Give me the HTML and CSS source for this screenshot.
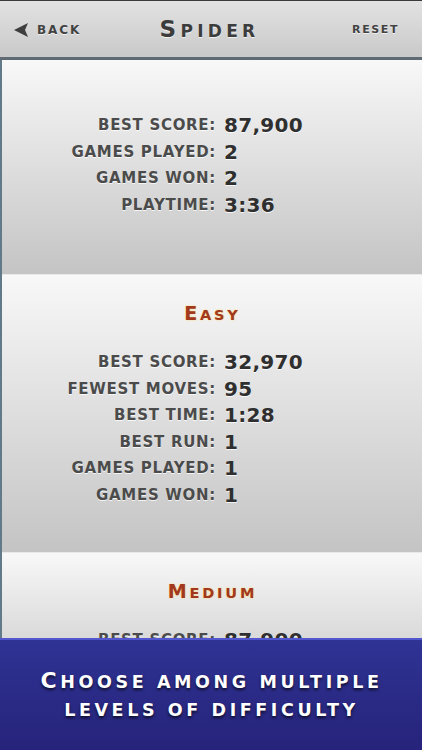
FILE: index.html
```html
<!DOCTYPE html>
<html>
<head>
<meta charset="utf-8">
<link rel="stylesheet" href="styles.css">
</head>
<body>
<div class="screen">
  <header class="topbar">
    <div class="back">
      <svg class="arrow" width="15" height="14" viewBox="0 0 15 14"><path d="M0 7 L14 0 L11 7 L14 14 Z" fill="#3e3e3e"/></svg>
      <span>back</span>
    </div>
    <div class="title"><span class="big">S</span>pider</div>
    <div class="reset">reset</div>
  </header>

  <main class="content">
    <section class="panel first">
      <div class="stats">
        <div class="label">best score:</div><div class="value">87,900</div>
        <div class="label">games played:</div><div class="value">2</div>
        <div class="label">games won:</div><div class="value">2</div>
        <div class="label">playtime:</div><div class="value">3:36</div>
      </div>
    </section>

    <section class="panel">
      <h2 class="level"><span class="big">E</span>asy</h2>
      <div class="stats">
        <div class="label">best score:</div><div class="value">32,970</div>
        <div class="label">fewest moves:</div><div class="value">95</div>
        <div class="label">best time:</div><div class="value">1:28</div>
        <div class="label">best run:</div><div class="value">1</div>
        <div class="label">games played:</div><div class="value">1</div>
        <div class="label">games won:</div><div class="value">1</div>
      </div>
    </section>

    <section class="panel">
      <h2 class="level"><span class="big">M</span>edium</h2>
      <div class="stats">
        <div class="label">best score:</div><div class="value">87,900</div>
      </div>
    </section>
  </main>

  <div class="banner">
    <p class="line"><span class="big">C</span>hoose among multiple</p>
    <p class="line">levels of difficulty</p>
  </div>
</div>
</body>
</html>
```

FILE: styles.css
```css
html, body {
  margin: 0;
  padding: 0;
}

body {
  width: 422px;
  height: 750px;
  overflow: hidden;
  font-family: "DejaVu Sans", "Liberation Sans", sans-serif;
  font-weight: bold;
  background: #c6c6c6;
}

.screen {
  position: relative;
  width: 422px;
  height: 750px;
  overflow: hidden;
  display: flex;
  flex-direction: column;
}

.topbar {
  height: 56px;
  flex: none;
  display: grid;
  grid-template-columns: 1fr auto 1fr;
  align-items: center;
  padding: 0 23px 0 14px;
  border-top: 1px solid #3a3a3a;
  border-bottom: 3px solid #5f6a72;
  background: linear-gradient(#e2e2e2, #c9c9c9);
  color: #424242;
  text-transform: uppercase;
  text-shadow: 0 1px 0 rgba(255,255,255,0.7);
}

.back {
  display: flex;
  align-items: center;
  gap: 8px;
  font-size: 12px;
  letter-spacing: 1.9px;
  padding-top: 1px;
}

.arrow {
  display: block;
}

.title {
  font-size: 17px;
  letter-spacing: 4.3px;
  color: #3c3c3c;
  padding-left: 6px;
}

.title .big {
  font-size: 23px;
}

.reset {
  justify-self: end;
  font-size: 11px;
  letter-spacing: 1.6px;
  padding-top: 1px;
}

.content {
  flex: 1;
  border-left: 2px solid #62798a;
  display: flex;
  flex-direction: column;
}

.panel {
  background: linear-gradient(#f8f8f8, #c4c4c4);
  border-bottom: 1px solid #e9e9e9;
  padding: 28px 0 44px;
  flex: none;
}

.panel.first {
  padding: 52px 0 56px;
}

.level {
  margin: 0 0 22px;
  text-align: center;
  font-size: 14.5px;
  line-height: 24px;
  letter-spacing: 2.8px;
  text-transform: uppercase;
  color: #a2381d;
  text-shadow: 0 0 2px #f7dd8c, 0 0 1px #f7dd8c;
  padding-left: 1px;
}

.level .big {
  font-size: 19px;
  line-height: 1;
}

.stats {
  display: grid;
  grid-template-columns: 1fr 1fr;
  column-gap: 8px;
  padding-left: 16px;
  line-height: 26.5px;
}

.label {
  text-align: right;
  font-size: 15px;
  text-transform: uppercase;
  letter-spacing: 0.7px;
  color: #4b4b4b;
  text-shadow: 0 1px 0 rgba(255,255,255,0.8);
}

.value {
  font-size: 20px;
  color: #2f2f2f;
  letter-spacing: 0.3px;
  text-shadow: 0 1px 0 rgba(255,255,255,0.8);
}

.banner {
  position: absolute;
  left: 0;
  right: 0;
  bottom: 0;
  height: 112px;
  box-sizing: border-box;
  border-top: 2px solid #5257cf;
  background: linear-gradient(#2f3394, #26237a);
  display: flex;
  flex-direction: column;
  align-items: center;
  justify-content: center;
  padding-top: 2px;
}

.line {
  margin: 0;
  height: 28px;
  color: #ffffff;
  text-transform: uppercase;
  font-size: 17.5px;
  line-height: 28px;
  letter-spacing: 3.6px;
  text-shadow: 0 2px 3px rgba(0,0,0,0.7);
  padding-left: 1px;
}

.line .big {
  font-size: 22px;
  line-height: 1;
}
```
